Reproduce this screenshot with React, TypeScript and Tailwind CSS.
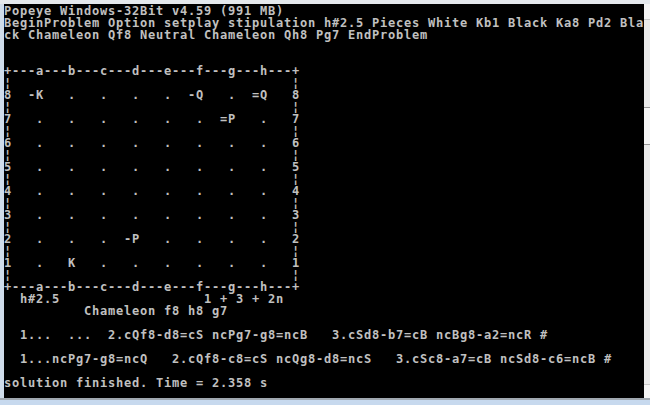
import React from "react";

const B = "¦                                   ¦";
const lines: string[] = [
  "Popeye Windows-32Bit v4.59 (991 MB)",
  "BeginProblem Option setplay stipulation h#2.5 Pieces White Kb1 Black Ka8 Pd2 Bla",
  "ck Chameleon Qf8 Neutral Chameleon Qh8 Pg7 EndProblem",
  "",
  "",
  "+---a---b---c---d---e---f---g---h---+",
  B,
  "8  -K   .   .   .   .  -Q   .  =Q   8",
  B,
  "7   .   .   .   .   .   .  =P   .   7",
  B,
  "6   .   .   .   .   .   .   .   .   6",
  B,
  "5   .   .   .   .   .   .   .   .   5",
  B,
  "4   .   .   .   .   .   .   .   .   4",
  B,
  "3   .   .   .   .   .   .   .   .   3",
  B,
  "2   .   .   .  -P   .   .   .   .   2",
  B,
  "1   .   K   .   .   .   .   .   .   1",
  B,
  "+---a---b---c---d---e---f---g---h---+",
  "  h#2.5                  1 + 3 + 2n",
  "          Chameleon f8 h8 g7",
  "",
  "  1...  ...  2.cQf8-d8=cS ncPg7-g8=ncB   3.cSd8-b7=cB ncBg8-a2=ncR #",
  "",
  "  1...ncPg7-g8=ncQ   2.cQf8-c8=cS ncQg8-d8=ncS   3.cSc8-a7=cB ncSd8-c6=ncB #",
  "",
  "solution finished. Time = 2.358 s",
];

export default function App() {
  return (
    <div className="w-[650px] h-[405px] flex flex-col bg-[#d3e0ee] overflow-hidden">
      <div className="h-[4px] bg-[#e4e8ec] shrink-0" />
      <div className="flex h-[394px] shrink-0">
        <div className="w-[4px] bg-[#cfdcea] shrink-0" />
        <div className="w-[640px] bg-black shrink-0 overflow-hidden pt-[1px]">
          {lines.map((l, i) => (
            <div
              key={i}
              className="h-[12px] leading-[12px] whitespace-pre text-[#c0c0c0] text-[12px] font-bold tracking-[0.776px]"
              style={{ fontFamily: '"DejaVu Sans Mono", monospace' }}
            >
              {l}
            </div>
          ))}
        </div>
        <div className="w-[6px] bg-[#ebebeb] shrink-0 flex flex-col">
          <div className="h-[16px] bg-[#f4f4f4] border-b border-[#c9c9c9]" />
          <div className="h-[87px]" />
          <div className="h-[38px] bg-[#f6f6f6] border-y border-[#9a9a9a]" />
          <div className="flex-1" />
          <div className="h-[14px] bg-[#f4f4f4] border-t border-[#c9c9c9]" />
        </div>
      </div>
      <div className="h-[2px] bg-[#a0a8b0] shrink-0" />
      <div className="flex-1 bg-[#c7d9ee]" />
    </div>
  );
}
